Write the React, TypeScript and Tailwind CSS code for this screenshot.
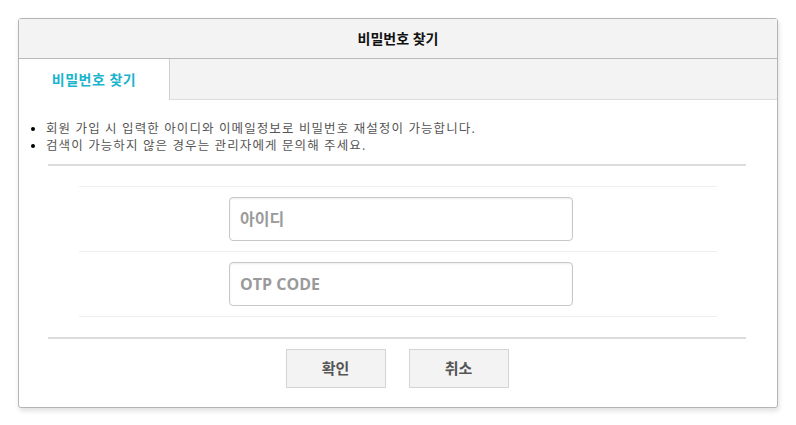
import { useState } from "react";

const NOTICES = [
  "회원 가입 시 입력한 아이디와 이메일정보로 비밀번호 재설정이 가능합니다.",
  "검색이 가능하지 않은 경우는 관리자에게 문의해 주세요.",
];

const FONT = "font-['Open_Sans','Noto_Sans_CJK_KR',sans-serif]";

export default function App() {
  const [userId, setUserId] = useState("");
  const [otp, setOtp] = useState("");

  return (
    <div className={`min-h-[425px] bg-white pt-[18px] pl-[18px] ${FONT}`}>
      <div className="w-[760px] rounded-[3px] border border-[#b4b4b4] bg-white shadow-[1px_3px_5px_rgba(0,0,0,0.12)]">
        {/* Title bar */}
        <div className="flex h-[40px] items-center justify-center border-b border-[#b9b9b9] bg-[#f3f3f3]">
          <h1 className="text-[14px] font-bold text-[#111]">비밀번호 찾기</h1>
        </div>

        {/* Tabs */}
        <div className="flex h-[41px] border-b border-[#dcdcdc] bg-[#f3f3f3]">
          <button
            type="button"
            className="-mb-px w-[151px] border-r border-[#d0d0d0] bg-white text-[14px] font-bold tracking-[0.5px] text-[#19b4cd]"
          >
            비밀번호 찾기
          </button>
        </div>

        {/* Notice */}
        <ul className="list-disc pt-[20px] pl-[27px] text-[12.5px] leading-[17px] tracking-[1.1px] text-[#555] marker:text-black">
          {NOTICES.map((t) => (
            <li key={t}>{t}</li>
          ))}
        </ul>

        <div className="mt-[10px] ml-[29px] h-[2px] w-[698px] bg-[#dcdcdc]" />

        {/* Fields */}
        <div className="mx-auto mt-[20px] w-[638px] border-t border-[#eeeeee]">
          <div className="flex justify-center border-b border-[#eeeeee] py-[10px] pl-[6px]">
            <input
              value={userId}
              onChange={(e) => setUserId(e.target.value)}
              placeholder="아이디"
              className="h-[44px] w-[344px] rounded-[4px] border border-[#c8c8c8] px-[10px] text-[16px] font-bold text-[#333] shadow-[inset_0_1px_2px_rgba(0,0,0,0.08)] outline-none placeholder:text-[#9a9a9a]"
            />
          </div>
          <div className="flex justify-center border-b border-[#eeeeee] py-[10px] pl-[6px]">
            <input
              value={otp}
              onChange={(e) => setOtp(e.target.value)}
              placeholder="OTP CODE"
              className="h-[44px] w-[344px] rounded-[4px] border border-[#c8c8c8] px-[10px] text-[16px] font-bold text-[#333] shadow-[inset_0_1px_2px_rgba(0,0,0,0.08)] outline-none placeholder:text-[#9a9a9a]"
            />
          </div>
        </div>

        <div className="mt-[20px] ml-[29px] h-[2px] w-[698px] bg-[#dcdcdc]" />

        {/* Actions */}
        <div className="flex justify-center gap-[23px] pt-[10px] pb-[19px] pr-[2px]">
          <button
            type="button"
            className="h-[39px] w-[100px] border border-[#d4d4d4] bg-[#f3f3f3] text-[15px] font-bold text-[#555]"
          >
            확인
          </button>
          <button
            type="button"
            className="h-[39px] w-[100px] border border-[#d4d4d4] bg-[#f3f3f3] text-[15px] font-bold text-[#555]"
          >
            취소
          </button>
        </div>
      </div>
    </div>
  );
}
